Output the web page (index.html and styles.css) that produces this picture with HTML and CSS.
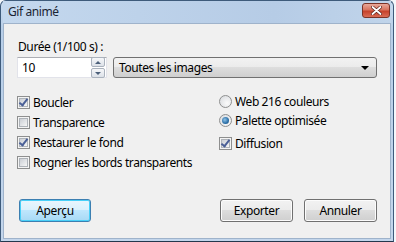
FILE: index.html
```html
<!DOCTYPE html>
<html lang="fr">

<head>
    <meta charset="UTF-8">
    <title>Gif animé</title>
    <link rel="stylesheet" href="styles.css">
</head>

<body>
    <div class="window">
        <div class="titlebar">
            <span class="title">Gif animé</span>
            <span class="close">
                <svg width="11" height="9" viewBox="0 0 11 9">
                    <path d="M1.5 1 L9.5 8 M9.5 1 L1.5 8" stroke="#5a2018" stroke-width="3.2" stroke-linecap="round"/>
                    <path d="M1.5 1 L9.5 8 M9.5 1 L1.5 8" stroke="#fff" stroke-width="1.8" stroke-linecap="round"/>
                </svg>
            </span>
        </div>
        <div class="client">
            <div class="field-label">Durée (1/100 s) :</div>
            <div class="row">
                <div class="spin">
                    <span class="spin-value">10</span>
                    <div class="spin-btns">
                        <span class="spin-btn"><i class="tri up"></i></span>
                        <span class="spin-btn"><i class="tri down"></i></span>
                    </div>
                </div>
                <div class="combo">
                    <span>Toutes les images</span>
                    <i class="tri combo-arrow"></i>
                </div>
            </div>

            <div class="options">
                <div class="col">
                    <div class="opt"><span class="check on"></span>Boucler</div>
                    <div class="opt"><span class="check"></span>Transparence</div>
                    <div class="opt"><span class="check on"></span>Restaurer le fond</div>
                    <div class="opt"><span class="check"></span>Rogner les bords transparents</div>
                </div>
                <div class="col right">
                    <div class="opt tight"><span class="radio"></span>Web 216 couleurs</div>
                    <div class="opt tight"><span class="radio on"></span>Palette optimisée</div>
                    <div class="opt last"><span class="check on"></span>Diffusion</div>
                </div>
            </div>

            <div class="actions">
                <span class="btn default">Aperçu</span>
                <span class="spacer"></span>
                <span class="btn">Exporter</span>
                <span class="btn">Annuler</span>
            </div>
        </div>
    </div>
</body>

</html>
```

FILE: styles.css
```css
body {
    margin: 0;
    background-color: #f4f7fb;
    font-family: "Noto Sans", sans-serif;
    font-size: 12px;
    letter-spacing: -0.4px;
    color: #000;
}

.window {
    width: 394px;
    height: 242px;
    box-sizing: border-box;
    border: 1px solid #3e5b7b;
    border-bottom-color: #24384d;
    border-radius: 6px 6px 0 0;
    background: linear-gradient(to bottom, #cadcf0, #b7cee8 30px, #c3d6ec);
    padding: 0 2px 2px;
    display: flex;
    flex-direction: column;
}

.titlebar {
    height: 22px;
    display: flex;
    align-items: center;
    padding-left: 5px;
    background: linear-gradient(to right, #c4d8ee, #b6cce6 70%, #c0d4ea);
}

.title {
    flex: 1;
    color: #1a2433;
    padding-bottom: 1px;
}

.close {
    width: 26px;
    height: 13px;
    margin-right: 1px;
    margin-top: -3px;
    border: 1px solid #7b3327;
    border-radius: 3px;
    background: linear-gradient(to bottom, #e9a99a, #d8745f 45%, #c6412a 55%, #d96c55);
    display: flex;
    align-items: center;
    justify-content: center;
}

.client {
    flex: 1;
    background-color: #f0f0f0;
    border: 1px solid #9fb3cb;
    padding: 15px 13px 0 13px;
}

.field-label {
    line-height: 15px;
    padding-left: 1px;
    margin-bottom: 3px;
}

.row {
    display: flex;
    height: 21px;
    gap: 6px;
}

.spin {
    width: 90px;
    box-sizing: border-box;
    background: #fff;
    border: 1px solid #e2e3ea;
    border-top-color: #abadb3;
    display: flex;
    align-items: center;
    padding-left: 4px;
}

.spin-value {
    flex: 1;
}

.spin-btns {
    display: flex;
    flex-direction: column;
    gap: 1px;
    margin-right: 1px;
}

.spin-btn {
    width: 12px;
    height: 8px;
    border: 1px solid #aab2bd;
    border-radius: 2px;
    background: linear-gradient(to bottom, #f6f7f9, #dde2e9);
    display: flex;
    align-items: center;
    justify-content: center;
}

.tri {
    width: 0;
    height: 0;
    border-left: 3px solid transparent;
    border-right: 3px solid transparent;
}

.tri.up {
    border-bottom: 3px solid #4c607a;
}

.tri.down {
    border-top: 3px solid #4c607a;
}

.combo {
    flex: 1;
    box-sizing: border-box;
    border: 1px solid #707070;
    border-radius: 3px;
    background: linear-gradient(to bottom, #f2f2f2, #ebebeb 50%, #dddddd 50%, #cfcfcf);
    display: flex;
    align-items: center;
    padding: 0 7px 0 5px;
}

.combo span {
    flex: 1;
}

.combo-arrow {
    border-left-width: 4px;
    border-right-width: 4px;
    border-top: 4px solid #000;
}

.options {
    display: flex;
    margin-top: 14px;
}

.col {
    width: 202px;
}

.col.right {
    width: auto;
}

.opt {
    display: flex;
    align-items: center;
    height: 20px;
}

.opt.tight {
    height: 19px;
}

.opt.last {
    height: 22px;
    padding-top: 2px;
}

.check {
    width: 13px;
    height: 13px;
    box-sizing: border-box;
    border: 1px solid #8e8f8f;
    background: #f4f4f4;
    margin-right: 3px;
    position: relative;
}

.check::before {
    content: "";
    position: absolute;
    inset: 1px;
    border: 1px solid #aeb3b9;
    background: linear-gradient(135deg, #cbcfd5, #f6f6f6);
}

.check.on::after {
    content: "";
    position: absolute;
    left: 3px;
    top: 0px;
    width: 3px;
    height: 7px;
    border-right: 2px solid #4a5f97;
    border-bottom: 2px solid #4a5f97;
    transform: rotate(38deg);
}

.radio {
    width: 13px;
    height: 13px;
    box-sizing: border-box;
    border-radius: 50%;
    border: 1px solid #8e8f8f;
    background: radial-gradient(circle at 65% 65%, #fbfbfb, #d5d8dc);
    margin-right: 3px;
    display: flex;
    align-items: center;
    justify-content: center;
}

.radio.on::after {
    content: "";
    width: 7px;
    height: 7px;
    border-radius: 50%;
    background: radial-gradient(circle at 40% 40%, #8fc3e8, #2a6ea6 60%, #1d4f7c);
}

.actions {
    display: flex;
    margin-top: 27px;
    gap: 11px;
    padding-left: 2px;
}

.spacer {
    flex: 1;
}

.btn {
    width: 73px;
    height: 23px;
    box-sizing: border-box;
    border: 1px solid #707070;
    border-radius: 3px;
    background: linear-gradient(to bottom, #f2f2f2, #ebebeb 50%, #dddddd 50%, #cfcfcf);
    display: flex;
    align-items: center;
    justify-content: center;
    box-shadow: inset 0 0 0 1px #fcfcfc;
}

.btn.default {
    width: 72px;
    border-color: #3c7fb1;
    background: linear-gradient(to bottom, #eaf6fd, #d9f0fc 50%, #bee6fd 50%, #a7d9f5);
    box-shadow: inset 0 0 0 1px #48d0f8;
}
```
